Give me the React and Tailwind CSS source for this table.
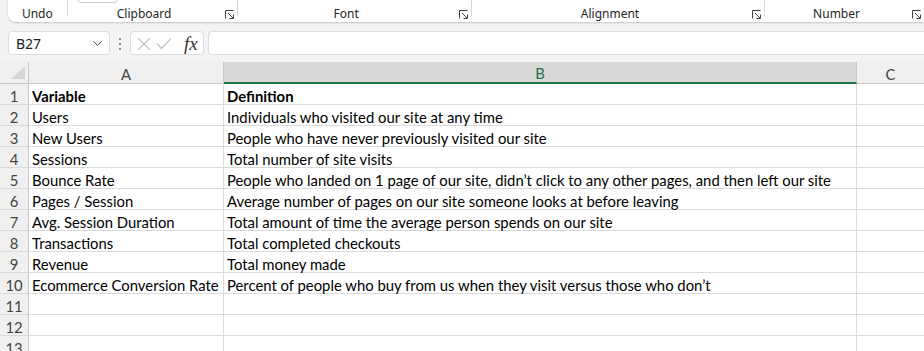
import React from "react";
import { ChevronDown } from "lucide-react";

const rows = [
  ["Variable", "Definition", true],
  ["Users", "Individuals who visited our site at any time"],
  ["New Users", "People who have never previously visited our site"],
  ["Sessions", "Total number of site visits"],
  ["Bounce Rate", "People who landed on 1 page of our site, didn\u2019t click to any other pages, and then left our site"],
  ["Pages / Session", "Average number of pages on our site someone looks at before leaving"],
  ["Avg. Session Duration", "Total amount of time the average person spends on our site"],
  ["Transactions", "Total completed checkouts"],
  ["Revenue", "Total money made"],
  ["Ecommerce Conversion Rate", "Percent of people who buy from us when they visit versus those who don\u2019t"],
  ["", ""],
  ["", ""],
  ["", ""],
];

const Launcher = () => (
  <svg width="9" height="9" viewBox="0 0 9 9" fill="none" stroke="#444" strokeWidth="1">
    <path d="M0.5 8.5 V0.5 H8.5" />
    <path d="M3 3 L8 8" />
    <path d="M8.5 4.5 V8.5 H4.5" />
  </svg>
);

const Group = ({ label, width, launcher = true, children }) => (
  <div className={`relative flex h-[22px] items-center pt-[6px] ${width}`}>
    {children}
    <span className="flex-1 text-center">{label}</span>
    {launcher && (
      <span className="mr-[3px] ml-[4px] flex w-[9px]">
        <Launcher />
      </span>
    )}
  </div>
);

const Sep = () => <div className="h-[16px] w-px bg-[#d6d6d6]" />;

const App = () => {
  return (
    <div className="flex h-[351px] w-[924px] flex-col overflow-hidden bg-[#f3f3f3]">
      {/* ribbon */}
      <div className="ml-[8px] flex h-[22px] rounded-bl-[8px] bg-white text-[12px] text-[#262626] shadow-[0_1px_2px_rgba(0,0,0,0.2)] [font-family:'Noto_Sans',sans-serif]">
        <Group label="Undo" width="w-[59px]" launcher={false} />
        <Sep />
        <Group label="Clipboard" width="w-[170px]">
          <div className="absolute top-[-11px] left-[9px] h-[14px] w-[41px] rounded-[4px] border border-[#c8c8c8]" />
        </Group>
        <Sep />
        <Group label="Font" width="w-[235px]" />
        <Sep />
        <Group label="Alignment" width="w-[294px]" />
        <Sep />
        <Group label="Number" width="w-[160px]" />
      </div>

      {/* formula bar */}
      <div className="mt-[9px] flex h-[26px] items-stretch">
        <div className="ml-[8px] flex w-[102px] items-center justify-between rounded-[4px] border border-[#dcdcdc] bg-white pt-[1px] pr-[4px] pl-[7px] text-[14px] text-[#222] [font-family:'Noto_Sans',sans-serif]">
          <span>B27</span>
          <ChevronDown size={15} strokeWidth={1.6} color="#444" />
        </div>
        <div className="flex w-[20px] flex-col items-center justify-center gap-[3px] pt-[1px]">
          <span className="h-[2px] w-[2px] bg-[#888]" />
          <span className="h-[2px] w-[2px] bg-[#888]" />
          <span className="h-[2px] w-[2px] bg-[#888]" />
        </div>
        <div className="flex w-[74px] items-center rounded-[4px] border border-[#dcdcdc] bg-white pt-[1px] pl-[6px]">
          <svg width="14" height="14" viewBox="0 0 14 14" stroke="#c4c4c4" strokeWidth="1.2" fill="none">
            <path d="M1 1 L13 13 M13 1 L1 13" />
          </svg>
          <svg className="ml-[5px]" width="16" height="13" viewBox="0 0 16 13" stroke="#c4c4c4" strokeWidth="1.2" fill="none">
            <path d="M1 6.5 L5.5 11.5 L15 1.5" />
          </svg>
          <span className="ml-[12px] text-[19px] leading-none text-[#333] italic [font-family:'Liberation_Serif',serif]">fx</span>
        </div>
        <div className="ml-[4px] flex-1 rounded-l-[4px] border border-r-0 border-[#dcdcdc] bg-white" />
      </div>

      {/* sheet */}
      <div className="mt-[7px] flex-1 bg-white text-[14.85px] text-black [font-family:Lato,'Liberation_Sans',sans-serif]">
        <div className="flex h-[22px] bg-[#f0f0f0] text-[#444]">
          <div className="flex w-[29px] items-end justify-end border-r border-b border-[#c6c6c6] pr-[3px] pb-[4px]">
            <svg width="14" height="13" viewBox="0 0 14 13">
              <path d="M14 0 L14 13 L0 13 Z" fill="#d4d4d4" />
            </svg>
          </div>
          <div className="flex w-[195px] items-center justify-center border-r border-b border-[#c6c6c6] pt-[3px]">A</div>
          <div className="flex w-[633px] items-center justify-center border-r border-b-2 border-r-[#c6c6c6] border-b-[#217346] bg-[#d9d9d9] pt-[3px] text-[#217346]">B</div>
          <div className="flex flex-1 items-center justify-center border-b border-[#c6c6c6] pt-[3px]">C</div>
        </div>
        {rows.map(([a, b, bold], i) => (
          <div key={i} className={`flex h-[21px] ${bold ? "font-bold" : ""}`}>
            <div className="flex w-[29px] items-center justify-center border-r border-b border-r-[#c6c6c6] border-b-[#dadada] bg-[#f0f0f0] pt-[4px] font-normal text-[#444]">
              {i + 1}
            </div>
            <div className="flex w-[195px] items-center border-r border-b border-[#dadada] pt-[4px] pl-[3px] whitespace-nowrap">{a}</div>
            <div className="flex w-[633px] items-center border-r border-b border-[#dadada] pt-[4px] pl-[3px] whitespace-nowrap">{b}</div>
            <div className="flex-1 border-b border-[#dadada]" />
          </div>
        ))}
      </div>
    </div>
  );
};

export default App;
